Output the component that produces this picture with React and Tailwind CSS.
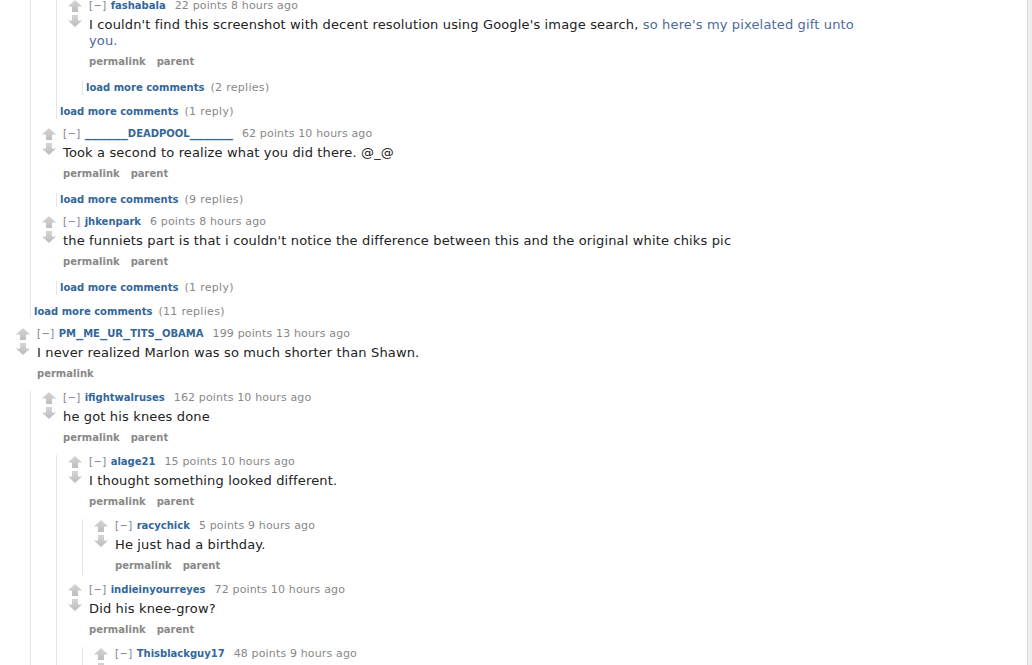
import React from 'react';

const font = { fontFamily: '"DejaVu Sans", Verdana, sans-serif' };

const UpArrow = () => (
    <svg width="14" height="12" viewBox="0 0 14 12">
        <defs>
            <linearGradient id="ga" x1="0" y1="0" x2="0" y2="1">
                <stop offset="0" stopColor="#d4d4d4" />
                <stop offset="1" stopColor="#bdbdbd" />
            </linearGradient>
        </defs>
        <path d="M7 0 L14 6.5 L10 6.5 L10 12 L4 12 L4 6.5 L0 6.5 Z" fill="url(#ga)" />
    </svg>
);

const DownArrow = () => (
    <svg width="14" height="12" viewBox="0 0 14 12">
        <defs>
            <linearGradient id="gb" x1="0" y1="0" x2="0" y2="1">
                <stop offset="0" stopColor="#d4d4d4" />
                <stop offset="1" stopColor="#bdbdbd" />
            </linearGradient>
        </defs>
        <path d="M4 0 L10 0 L10 5.5 L14 5.5 L7 12 L0 5.5 L4 5.5 Z" fill="url(#gb)" />
    </svg>
);

// verdana draws underscores a lot wider than dejavu
const Author = ({ name }) =>
    name.split(/(_+)/).map((part, i) =>
        part.startsWith('_') ? (
            <span key={i} className="text-[14.4px] leading-[0]">{part}</span>
        ) : (
            <span key={i}>{part}</span>
        )
    );

const Comment = ({ author, points, time, body, top, nested = true, replies }) => (
    <div className={`${nested ? 'ml-[10px]' : ''} mt-[8px]`}>
        <div className="flex pb-[3px]">
            <div className="w-[15px] shrink-0 flex flex-col items-center pt-[1px]">
                <UpArrow />
                <div className="h-[3px]" />
                <DownArrow />
            </div>
            <div className="ml-[7px]">
                <div className="h-[14px] leading-[14px] text-[10px] whitespace-nowrap">
                    <span className="text-[#767e90] tracking-[0.5px]">[−]</span>
                    <span className="ml-[4px] font-bold text-[#369]"><Author name={author} /></span>
                    <span className="ml-[9px] text-[11px] tracking-[0.15px] text-[#888]">{points} points {time}</span>
                </div>
                <div className="mt-[4px] min-h-[16px] text-[13px] leading-[16px] text-[#222] tracking-[0.15px]">{body}</div>
                <div className="mt-[7px] h-[12px] leading-[12px] text-[10px] font-bold text-[#888] flex">
                    <span>permalink</span>
                    {!top && <span className="ml-[11px]">parent</span>}
                </div>
            </div>
        </div>
        {replies}
    </div>
);

const Replies = ({ children, gap }) => (
    <div className={`ml-[15px] border-l border-[#e6e6e6] ${gap ? 'mt-[10px]' : ''}`}>{children}</div>
);

const LoadMore = ({ count, flush }) => (
    <div className={`${flush ? '' : 'mt-[10px]'} ml-[3px] h-[14px] leading-[14px] text-[10px] whitespace-nowrap`}>
        <span className="font-bold text-[#369]">load more comments</span>
        <span className="ml-[6px] text-[11px] tracking-[0.3px] text-[#888]">({count})</span>
    </div>
);

export default function App() {
    return (
        <div className="w-[1032px] h-[665px] overflow-hidden bg-white flex" style={font}>
            <div className="flex-1 pl-[15px]">
                <div className="ml-[15px] border-l border-[#e6e6e6] mt-[-9px]">
                    <div className="ml-[10px]">
                        <div className="ml-[15px] border-l border-[#e6e6e6]">
                            <Comment
                                author="fashabala"
                                points="22"
                                time="8 hours ago"
                                body={
                                    <>
                                        I couldn't find this screenshot with decent resolution using Google's image search,{' '}
                                        <span className="text-[#4d6a9c]">so here's my pixelated gift unto<br />you.</span>
                                    </>
                                }
                                replies={
                                    <Replies gap>
                                        <LoadMore count="2 replies" flush />
                                    </Replies>
                                }
                            />
                            <LoadMore count="1 reply" />
                        </div>
                    </div>
                    <Comment
                        author="______DEADPOOL______"
                        points="62"
                        time="10 hours ago"
                        body="Took a second to realize what you did there. @_@"
                        replies={
                            <Replies gap>
                                <LoadMore count="9 replies" flush />
                            </Replies>
                        }
                    />
                    <Comment
                        author="jhkenpark"
                        points="6"
                        time="8 hours ago"
                        body="the funniets part is that i couldn't notice the difference between this and the original white chiks pic"
                        replies={
                            <Replies gap>
                                <LoadMore count="1 reply" flush />
                            </Replies>
                        }
                    />
                    <LoadMore count="11 replies" />
                </div>
                <Comment
                    nested={false}
                    top
                    author="PM_ME_UR_TITS_OBAMA"
                    points="199"
                    time="13 hours ago"
                    body="I never realized Marlon was so much shorter than Shawn."
                    replies={
                        <Replies>
                            <Comment
                                author="ifightwalruses"
                                points="162"
                                time="10 hours ago"
                                body="he got his knees done"
                                replies={
                                    <Replies>
                                        <Comment
                                            author="alage21"
                                            points="15"
                                            time="10 hours ago"
                                            body="I thought something looked different."
                                            replies={
                                                <Replies>
                                                    <Comment
                                                        author="racychick"
                                                        points="5"
                                                        time="9 hours ago"
                                                        body="He just had a birthday."
                                                    />
                                                </Replies>
                                            }
                                        />
                                        <Comment
                                            author="indieinyourreyes"
                                            points="72"
                                            time="10 hours ago"
                                            body="Did his knee-grow?"
                                            replies={
                                                <Replies>
                                                    <Comment
                                                        author="Thisblackguy17"
                                                        points="48"
                                                        time="9 hours ago"
                                                        body=""
                                                    />
                                                </Replies>
                                            }
                                        />
                                    </Replies>
                                }
                            />
                        </Replies>
                    }
                />
            </div>
            <div className="w-[5px] shrink-0 border-l border-[#d8d8d8] bg-[#efefef]" />
        </div>
    );
}
